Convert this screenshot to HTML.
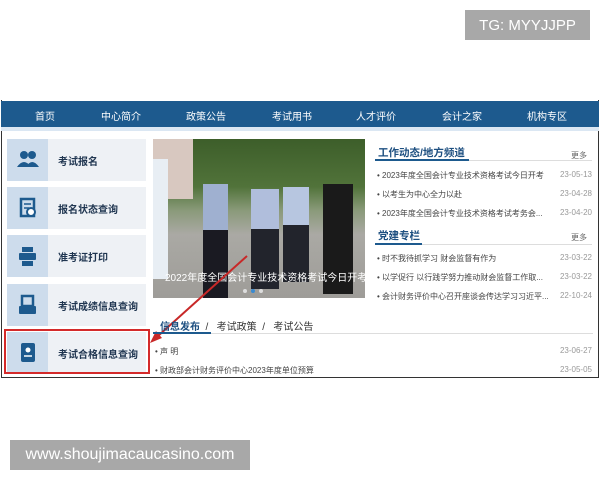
<!DOCTYPE html>
<html><head><meta charset="utf-8"><style>
*{margin:0;padding:0;box-sizing:border-box}
body{width:600px;height:480px;background:#fff;position:relative;overflow:hidden;font-family:"Liberation Sans","Noto Sans CJK SC",sans-serif}
.a{position:absolute}
.badge{background:#a8a8a8;color:#fff;font-size:15px;display:flex;align-items:center;justify-content:center}
.nav{left:1px;top:101px;width:598px;height:26px;background:#1d5a8e;color:#fff;font-size:10px}
.nav span{position:absolute;top:7px}
.btn{left:7px;width:139px;height:42px;background:#eef1f5}
.btn .ic{position:absolute;left:0;top:0;width:41px;height:42px;background:#cddcec}
.btn .t{position:absolute;left:51px;top:14px;font-size:10px;color:#1f3550;font-weight:bold}
.ttl{font-size:10.5px;color:#1d4f80;font-weight:bold}
.li{font-size:8px;color:#444;left:377px;width:215px}
.li b{font-weight:normal;color:#999;position:absolute;right:0}
.more{font-size:8px;color:#666}
</style></head><body>
<div class="a badge" style="left:465px;top:10px;width:125px;height:30px">TG: MYYJJPP</div>
<div class="a badge" style="left:10px;top:440px;width:240px;height:30px;font-size:16px">www.shoujimacaucasino.com</div>

<div class="a" style="left:1px;top:100px;width:598px;height:278px;border:1px solid #333;border-top:none"></div>
<div class="a nav"><span style="left:34px">首页</span><span style="left:100px">中心简介</span><span style="left:185px">政策公告</span><span style="left:271px">考试用书</span><span style="left:355px">人才评价</span><span style="left:441px">会计之家</span><span style="left:526px">机构专区</span></div>
<div class="a" style="left:1px;top:127px;width:598px;height:4px;background:#dbe7f3"></div>

<div class="a btn" style="top:139px"><div class="ic"><svg width="41" height="42"><circle cx="17" cy="16" r="4" fill="#1d5a8e"/><circle cx="25" cy="16" r="4" fill="#1d5a8e"/><path d="M10 28q7-10 14 0zM19 28q6-10 13 0z" fill="#1d5a8e"/></svg></div><div class="t">考试报名</div></div>
<div class="a btn" style="top:187px"><div class="ic"><svg width="41" height="42"><rect x="14" y="12" width="13" height="17" fill="none" stroke="#1d5a8e" stroke-width="2.5"/><circle cx="24" cy="25" r="4" fill="#fff" stroke="#1d5a8e" stroke-width="2"/><path d="M17 17h7M17 21h5" stroke="#1d5a8e" stroke-width="1.5"/></svg></div><div class="t">报名状态查询</div></div>
<div class="a btn" style="top:235px"><div class="ic"><svg width="41" height="42"><rect x="15" y="12" width="11" height="5" fill="#1d5a8e"/><rect x="12" y="18" width="17" height="7" rx="1" fill="#1d5a8e"/><rect x="15" y="26" width="11" height="5" fill="#1d5a8e"/></svg></div><div class="t">准考证打印</div></div>
<div class="a btn" style="top:284px"><div class="ic"><svg width="41" height="42"><rect x="15" y="12" width="11" height="10" fill="none" stroke="#1d5a8e" stroke-width="2.5"/><rect x="12" y="22" width="17" height="8" rx="1" fill="#1d5a8e"/></svg></div><div class="t">考试成绩信息查询</div></div>
<div class="a btn" style="top:332px"><div class="ic"><svg width="41" height="42"><rect x="14" y="11" width="14" height="19" rx="2" fill="#1d5a8e"/><circle cx="21" cy="18" r="2.5" fill="#fff"/><path d="M17 24h8" stroke="#fff" stroke-width="1.5"/></svg></div><div class="t">考试合格信息查询</div></div>
<div class="a" style="left:4px;top:329px;width:146px;height:45px;border:2px solid #d42a2a"></div>

<div class="a" style="left:153px;top:139px;width:212px;height:159px;overflow:hidden;background:linear-gradient(#3d5e2a 0,#51733a 30%,#8a9a7a 45%,#aaa9a4 60%,#9e9c98 100%)">
<div class="a" style="left:0;top:0;width:40px;height:60px;background:#d8c8c0"></div>
<div class="a" style="left:0;top:20px;width:15px;height:120px;background:#e8eef4"></div>
<div class="a" style="left:50px;top:45px;width:25px;height:115px;background:linear-gradient(#9fb0d0 40%,#1a1a22 40%)"></div>
<div class="a" style="left:98px;top:50px;width:28px;height:100px;background:linear-gradient(#b0bedc 40%,#22242c 40%)"></div>
<div class="a" style="left:130px;top:48px;width:26px;height:95px;background:linear-gradient(#b7c6e0 40%,#22242c 40%)"></div>
<div class="a" style="left:170px;top:45px;width:30px;height:110px;background:#1a1a1a"></div>
<div class="a" style="left:12px;top:130px;color:#fff;font-size:10px;white-space:nowrap">2022年度全国会计专业技术资格考试今日开考</div>
<div class="a" style="left:90px;top:150px;width:4px;height:4px;border-radius:2px;background:#ddd"></div>
<div class="a" style="left:98px;top:150px;width:4px;height:4px;border-radius:2px;background:#3a8ad0"></div>
<div class="a" style="left:106px;top:150px;width:4px;height:4px;border-radius:2px;background:#ddd"></div>
</div>
<svg class="a" style="left:0;top:0" width="600" height="480"><line x1="247" y1="256" x2="158" y2="336" stroke="#c82828" stroke-width="2"/><path d="M150 343l6-12 6 7z" fill="#c82828"/></svg>

<div class="a ttl" style="left:378px;top:145px">工作动态/地方频道</div>
<div class="a" style="left:375px;top:160px;width:217px;height:1px;background:#ddd"></div>
<div class="a" style="left:375px;top:159px;width:94px;height:2px;background:#1d5a8e"></div>
<div class="a more" style="left:571px;top:150px">更多</div>
<div class="a li" style="top:170px">• 2023年度全国会计专业技术资格考试今日开考<b>23-05-13</b></div>
<div class="a li" style="top:189px">• 以考生为中心全力以赴<b>23-04-28</b></div>
<div class="a li" style="top:208px">• 2023年度全国会计专业技术资格考试考务会...<b>23-04-20</b></div>
<div class="a ttl" style="left:378px;top:228px">党建专栏</div>
<div class="a" style="left:375px;top:244px;width:217px;height:1px;background:#ddd"></div>
<div class="a" style="left:375px;top:243px;width:47px;height:2px;background:#1d5a8e"></div>
<div class="a more" style="left:571px;top:232px">更多</div>
<div class="a li" style="top:253px">• 时不我待抓学习 财会监督有作为<b>23-03-22</b></div>
<div class="a li" style="top:272px">• 以学促行 以行践学努力推动财会监督工作取...<b>23-03-22</b></div>
<div class="a li" style="top:291px">• 会计财务评价中心召开座谈会传达学习习近平...<b>22-10-24</b></div>

<div class="a" style="left:160px;top:318px;font-size:10px;color:#333"><span style="color:#1d4f80;font-weight:bold">信息发布</span> &nbsp;/ &nbsp; 考试政策 &nbsp;/ &nbsp; 考试公告</div>
<div class="a" style="left:153px;top:333px;width:440px;height:1px;background:#ddd"></div>
<div class="a" style="left:153px;top:332px;width:58px;height:2px;background:#1d5a8e"></div>
<div class="a li" style="left:155px;width:437px;top:346px">• 声 明<b>23-06-27</b></div>
<div class="a li" style="left:155px;width:437px;top:365px">• 财政部会计财务评价中心2023年度单位预算<b>23-05-05</b></div>
</body></html>
